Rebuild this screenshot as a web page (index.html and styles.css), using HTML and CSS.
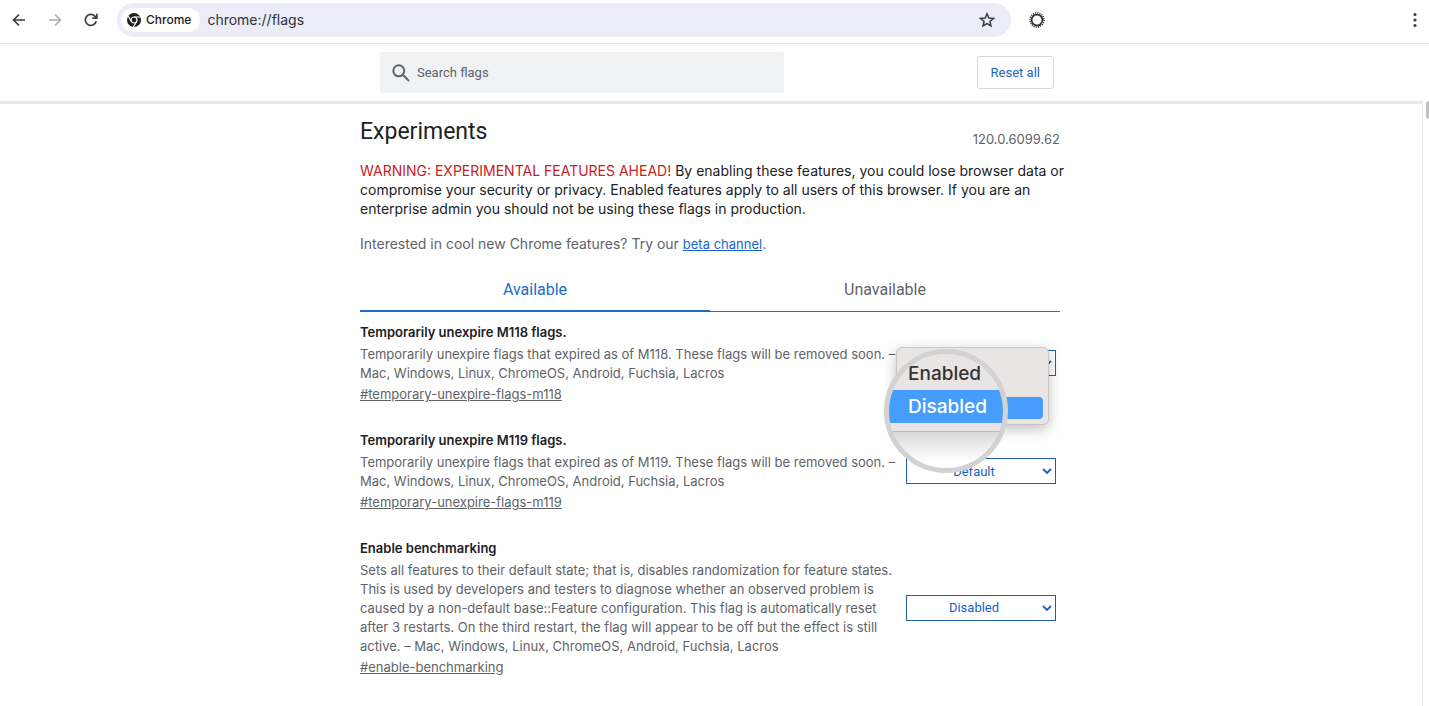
FILE: index.html
```
<!DOCTYPE html>
<html lang="en">
<head>
    <meta charset="UTF-8">
    <meta name="viewport" content="width=device-width, initial-scale=1.0">
    <title>Experiments</title>
    <link rel="stylesheet" href="styles.css">
</head>
<body>
    <div class="toolbar">
        <button class="icon-btn" aria-label="Back">
            <svg width="14" height="14" viewBox="0 0 14 14" fill="none" stroke="#3c3d40" stroke-width="1.7"><path d="M13 7H2M7 1.5L1.5 7L7 12.5"/></svg>
        </button>
        <button class="icon-btn" aria-label="Forward">
            <svg width="14" height="14" viewBox="0 0 14 14" fill="none" stroke="#a9aaad" stroke-width="1.5"><path d="M1 7H12M7 1.5L12.5 7L7 12.5"/></svg>
        </button>
        <button class="icon-btn" aria-label="Reload">
            <svg width="14" height="14" viewBox="0 0 14 14" fill="none" stroke="#3c3d40" stroke-width="1.7"><path d="M12.2 8.2A5.5 5.5 0 1 1 10.8 3.1L12.6 5"/><path d="M12.8 .8V5.2H8.4"/></svg>
        </button>
        <div class="omnibox">
            <span class="chip">
                <svg width="14" height="14" viewBox="0 0 14 14"><circle cx="7" cy="7" r="7" fill="#1f2023"/><g fill="none" stroke="#fff" stroke-width="1.2"><circle cx="7" cy="7" r="3"/><path d="M7 4H13.4M4.4 8.5L1.2 3M9.6 8.5L6.4 14"/></g></svg>
                Chrome
            </span>
            <input class="url" type="text" value="chrome://flags" aria-label="Address">
            <button class="icon-btn" aria-label="Bookmark">
                <svg width="16" height="16" viewBox="0 0 16 16" fill="none" stroke="#3c3d40" stroke-width="1.5"><path d="M8 1.8L9.8 6.1L14.5 6.5L10.9 9.5L12 14L8 11.6L4 14L5.1 9.5L1.5 6.5L6.2 6.1Z"/></svg>
            </button>
        </div>
        <button class="icon-btn extension" aria-label="Extension">
            <svg width="16" height="16" viewBox="0 0 16 16" fill="none" stroke="#333"><circle cx="8" cy="8" r="5.4" stroke-width="1.8"/><circle cx="8" cy="8" r="7" stroke-width="1.6" stroke-dasharray="1.1 1.1"/></svg>
        </button>
        <button class="icon-btn" aria-label="Menu">
            <svg width="4" height="16" viewBox="0 0 4 16" fill="#3c3d40"><circle cx="2" cy="2.5" r="1.6"/><circle cx="2" cy="8" r="1.6"/><circle cx="2" cy="13.5" r="1.6"/></svg>
        </button>
    </div>

    <div class="page">
        <header class="header">
            <div class="header-content">
                <label class="search">
                    <svg width="18" height="18" viewBox="0 0 18 18" fill="none" stroke="#5f6368" stroke-width="2"><circle cx="6.8" cy="6.8" r="5.5"/><path d="M10.8 10.8L17 17"/></svg>
                    <input type="text" placeholder="Search flags" aria-label="Search flags">
                </label>
                <button class="reset">Reset all</button>
            </div>
        </header>

        <main class="body">
            <div class="title-row">
                <h1>Experiments</h1>
                <span class="version">120.0.6099.62</span>
            </div>
            <p class="blurb"><span class="warning">WARNING: EXPERIMENTAL FEATURES AHEAD!</span> By enabling these features, you could lose browser data or compromise your security or privacy. Enabled features apply to all users of this browser. If you are an enterprise admin you should not be using these flags in production.</p>
            <p class="promo">Interested in cool new Chrome features? Try our <a href="#beta">beta channel</a>.</p>

            <div class="tabs" role="tablist">
                <button class="tab selected" role="tab" aria-selected="true">Available</button>
                <button class="tab" role="tab" aria-selected="false">Unavailable</button>
            </div>

            <section class="flag">
                <div class="flag-text">
                    <h2>Temporarily unexpire M118 flags.</h2>
                    <p>Temporarily unexpire flags that expired as of M118. These flags will be removed soon. – Mac, Windows, Linux, ChromeOS, Android, Fuchsia, Lacros</p>
                    <a href="#temporary-unexpire-flags-m118">#temporary-unexpire-flags-m118</a>
                </div>
                <div class="control">
                    <select aria-label="Temporarily unexpire M118 flags">
                        <option>Default</option>
                        <option>Enabled</option>
                        <option>Disabled</option>
                    </select>
                    <svg class="chevron" width="10" height="6" viewBox="0 0 10 6" fill="none" stroke="#1a5fc8" stroke-width="1.8"><path d="M1 1L5 5L9 1"/></svg>
                    <div class="popup"><div class="popup-active"></div></div>
                    <div class="lens">
                        <div class="lens-menu">
                            <div class="lens-item">Enabled</div>
                            <div class="lens-item active">Disabled</div>
                        </div>
                    </div>
                </div>
            </section>

            <section class="flag">
                <div class="flag-text">
                    <h2>Temporarily unexpire M119 flags.</h2>
                    <p>Temporarily unexpire flags that expired as of M119. These flags will be removed soon. – Mac, Windows, Linux, ChromeOS, Android, Fuchsia, Lacros</p>
                    <a href="#temporary-unexpire-flags-m119">#temporary-unexpire-flags-m119</a>
                </div>
                <div class="control">
                    <select aria-label="Temporarily unexpire M119 flags">
                        <option>Default</option>
                        <option>Enabled</option>
                        <option>Disabled</option>
                    </select>
                    <svg class="chevron" width="10" height="6" viewBox="0 0 10 6" fill="none" stroke="#1a5fc8" stroke-width="1.8"><path d="M1 1L5 5L9 1"/></svg>
                </div>
            </section>

            <section class="flag">
                <div class="flag-text">
                    <h2>Enable benchmarking</h2>
                    <p>Sets all features to their default state; that is, disables randomization for feature states. This is used by developers and testers to diagnose whether an observed problem is caused by a non-default base::Feature configuration. This flag is automatically reset after 3 restarts. On the third restart, the flag will appear to be off but the effect is still active. – Mac, Windows, Linux, ChromeOS, Android, Fuchsia, Lacros</p>
                    <a href="#enable-benchmarking">#enable-benchmarking</a>
                </div>
                <div class="control">
                    <select aria-label="Enable benchmarking">
                        <option>Disabled</option>
                        <option>Enabled</option>
                    </select>
                    <svg class="chevron" width="10" height="6" viewBox="0 0 10 6" fill="none" stroke="#1a5fc8" stroke-width="1.8"><path d="M1 1L5 5L9 1"/></svg>
                </div>
            </section>
        </main>
        <div class="scrollbar"><div class="thumb"></div></div>
    </div>
</body>
</html>
```
FILE: styles.css
```
* {
    box-sizing: border-box;
}
body {
    font-family: Inter, sans-serif;
    font-size: 13px;
    margin: 0;
    min-height: 100vh;
    display: flex;
    flex-direction: column;
    background-color: #fff;
    color: #202124;
}
button, input, select {
    font-family: inherit;
    font-size: 13px;
}
svg {
    display: block;
    flex: none;
}
h1, h2, p {
    margin: 0;
}

/* browser toolbar */
.toolbar {
    display: flex;
    align-items: center;
    height: 44px;
    padding: 0 12px 4px;
    border-bottom: 1px solid #dedfe2;
}
.icon-btn {
    border: 0;
    padding: 0;
    background: none;
    margin-right: 22px;
}
.omnibox {
    display: flex;
    align-items: center;
    flex: 0 1 894px;
    height: 34px;
    margin-left: -3px;
    padding: 0 16px 0 4px;
    border-radius: 17px;
    background-color: #ececf8;
}
.omnibox .icon-btn {
    margin: 0;
}
.chip {
    display: flex;
    align-items: center;
    gap: 5px;
    height: 24px;
    padding: 0 9px 0 6px;
    border-radius: 12px;
    background-color: #fff;
    font-size: 12px;
    font-weight: 500;
}
.url {
    flex: 1;
    min-width: 0;
    border: 0;
    padding: 0 7px;
    background: none;
    color: #303136;
    font-size: 14px;
}
.extension {
    margin: 0 auto 0 18px;
}
.toolbar > .icon-btn:last-child {
    margin-right: 0;
}

/* flags page */
.page {
    position: relative;
    flex: 1;
    padding-right: 7px;
}
.header {
    padding: 8px 0;
    border-bottom: 3px solid #e8e8e9;
}
.header-content {
    display: flex;
    align-items: center;
    justify-content: space-between;
    max-width: 702px;
    margin: 0 auto;
    padding: 0 8px 0 20px;
}
.search {
    display: flex;
    align-items: center;
    gap: 7px;
    flex: 0 1 404px;
    height: 41px;
    padding: 0 12px;
    border-radius: 3px;
    background-color: #f1f2f3;
}
.search input {
    flex: 1;
    min-width: 0;
    border: 0;
    padding: 0;
    background: none;
}
.search input::placeholder {
    color: #5f6368;
}
.search input, .reset, .control select {
    font-family: Roboto, sans-serif;
}
.reset {
    height: 33px;
    padding: 0 13px;
    border: 1px solid #d5d7da;
    border-radius: 3px;
    background-color: #fff;
    color: #1967c8;
}
.body {
    max-width: 702px;
    margin: 0 auto;
    padding: 14px 2px 0 0;
}
.title-row {
    display: flex;
    align-items: flex-end;
    justify-content: space-between;
}
h1 {
    font-family: Roboto, sans-serif;
    font-size: 23px;
    font-weight: 400;
    line-height: 28px;
}
.version {
    color: #5f6368;
    line-height: 14px;
}
.blurb {
    margin: 15px -10px 0 0;
    font-size: 14px;
    line-height: 19px;
}
.warning {
    color: #c5221f;
}
.promo {
    margin-top: 16px;
    color: #5f6368;
    font-size: 14px;
    line-height: 20px;
}
.promo a {
    color: #1a66c2;
    font-size: 13px;
}
.tabs {
    display: flex;
    margin-top: 14px;
}
.tab {
    flex: 1;
    height: 44px;
    padding: 0;
    border: 0;
    border-bottom: 1px solid #5f6368;
    background: none;
    color: #5f6368;
    font-family: Roboto, sans-serif;
    font-size: 16px;
}
.tab.selected {
    border-bottom: 2px solid #1a6bcb;
    color: #1a6bd0;
}
.flag {
    display: flex;
    align-items: center;
    justify-content: space-between;
    padding: 8px 4px 14px 0;
}
.flag-text {
    flex: 0 1 541px;
    color: #5f6368;
}
.flag h2 {
    color: #202124;
    font-size: 13px;
    font-weight: 600;
    line-height: 25px;
}
.flag p {
    line-height: 19px;
}
.flag-text a {
    display: block;
    color: #5f6368;
    line-height: 23px;
}
.control {
    position: relative;
    flex: none;
    width: 150px;
}
.control select {
    appearance: none;
    display: block;
    width: 100%;
    height: 26px;
    padding: 0 14px 0 0;
    border: 1px solid #1f5fa8;
    border-radius: 0;
    background-color: #fff;
    color: #1a5fc8;
    text-align-last: center;
}
.chevron {
    position: absolute;
    top: 10px;
    right: 4px;
}

/* open menu with the magnifier over it */
.popup {
    position: absolute;
    z-index: 1;
    top: -3px;
    left: -10px;
    width: 153px;
    height: 78px;
    padding: 49px 5px 5px;
    border: 1px solid #c9c6c5;
    border-radius: 6px;
    background-color: #e9e5e4;
    box-shadow: 0 4px 14px rgba(0, 0, 0, 0.25);
}
.popup-active {
    height: 22px;
    border-radius: 4px;
    background-color: #479dfb;
}
.lens {
    position: absolute;
    z-index: 2;
    top: -1px;
    left: -22px;
    width: 124px;
    height: 124px;
    overflow: hidden;
    border: 5px solid #d2d2d2;
    border-radius: 50%;
    background: linear-gradient(#d8d8d8 76px, #fff 108px);
}
.lens-menu {
    padding: 3px 0 8px;
    border-bottom: 1px solid #bdbbba;
    background-color: #e9e5e4;
}
.lens-item {
    padding-left: 19px;
    color: #333;
    font-size: 19px;
    font-weight: 500;
    line-height: 33px;
}
.lens-item.active {
    background-color: #479dfb;
    color: #fff;
}

.scrollbar {
    position: absolute;
    top: 57px;
    right: 0;
    bottom: 0;
    width: 7px;
    padding-left: 3px;
    border-left: 1px solid #e8e8e8;
}
.thumb {
    height: 18px;
    border-radius: 3px 0 0 3px;
    background-color: #c1c1c1;
}
```
